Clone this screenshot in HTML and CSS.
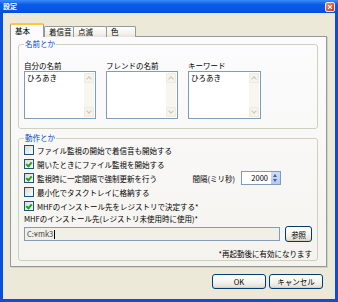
FILE: index.html
```html
<!DOCTYPE html>
<html lang="ja">
<head>
    <meta charset="UTF-8">
    <title>設定</title>
    <link rel="stylesheet" href="styles.css">
</head>
<body>
<div class="window">
    <div class="titlebar">
        <span class="title">設定</span>
        <span class="close">
            <svg width="8" height="8" viewBox="0 0 8 8"><path d="M1.5 1.5 L6.5 6.5 M6.5 1.5 L1.5 6.5" stroke="#fff" stroke-width="1.6"/></svg>
        </span>
    </div>
    <div class="client">
        <div class="tabs">
            <div class="tab active">基本</div>
            <div class="tab t2">着信音</div>
            <div class="tab t3">点滅</div>
            <div class="tab t4">色</div>
        </div>
        <div class="panel">
            <fieldset class="group names">
                <legend>名前とか</legend>
                <div class="fields">
                    <div class="field">
                        <div class="lbl">自分の名前</div>
                        <div class="memo"><span class="memo-text">ひろあき</span><div class="sbar"><span class="sbtn up"></span><span class="strack"></span><span class="sbtn down"></span></div></div>
                    </div>
                    <div class="field">
                        <div class="lbl">フレンドの名前</div>
                        <div class="memo"><span class="memo-text"></span><div class="sbar"><span class="sbtn up"></span><span class="strack"></span><span class="sbtn down"></span></div></div>
                    </div>
                    <div class="field">
                        <div class="lbl">キーワード</div>
                        <div class="memo"><span class="memo-text">ひろあき</span><div class="sbar"><span class="sbtn up"></span><span class="strack"></span><span class="sbtn down"></span></div></div>
                    </div>
                </div>
            </fieldset>
            <fieldset class="group actions">
                <legend>動作とか</legend>
                <div class="row"><span class="cb"></span>ファイル監視の開始で着信音も開始する</div>
                <div class="row"><span class="cb on"></span>開いたときにファイル監視を開始する</div>
                <div class="row"><span class="cb on"></span>監視時に一定間隔で強制更新を行う
                    <span class="interval">間隔(ミリ秒)
                        <span class="spin"><span class="spin-val">2000</span><span class="spin-btns"></span></span>
                    </span>
                </div>
                <div class="row"><span class="cb"></span>最小化でタスクトレイに格納する</div>
                <div class="row"><span class="cb on"></span>MHFのインストール先をレジストリで決定する*</div>
                <div class="path-label">MHFのインストール先(レジストリ未使用時に使用)*</div>
                <div class="path-row">
                    <span class="path">C:¥mk3<span class="caret"></span></span>
                    <span class="btn small">参照</span>
                </div>
                <div class="note">*再起動後に有効になります</div>
            </fieldset>
        </div>
        <div class="buttons">
            <span class="btn">OK</span>
            <span class="btn">キャンセル</span>
        </div>
    </div>
</div>
</body>
</html>
```

FILE: styles.css
```css
body {
    margin: 0;
    font-family: "Noto Sans CJK JP", "Liberation Sans", sans-serif;
    font-size: 7.5px;
    color: #000;
}

.window {
    width: 338px;
    height: 302px;
    box-sizing: border-box;
    background: #0a4fdc;
    padding: 0 3px 3px;
    display: flex;
    flex-direction: column;
}
.titlebar {
    height: 13px;
    display: flex;
    align-items: center;
    justify-content: space-between;
    background: linear-gradient(#3d8cf8, #0a5ce8 35%, #0654e4 85%, #0a4ccc);
    margin: 0 -3px;
    padding: 0 3px;
}
.title {
    color: #fff;
    font-weight: bold;
    font-size: 7px;
    line-height: 13px;
}
.close {
    width: 10px;
    height: 10px;
    box-sizing: border-box;
    border: 1px solid #f4e8e0;
    border-radius: 2px;
    background: linear-gradient(135deg, #f09070, #e0522a 60%, #c83a18);
    display: flex;
    align-items: center;
    justify-content: center;
}
.close svg { display: block; width: 6px; height: 6px; }

.client {
    flex: 1;
    background: #ece9d8;
    padding: 10px 8px 0 7px;
}

/* tabs */
.tabs {
    display: flex;
    align-items: flex-end;
    height: 14px;
    margin-bottom: -1px;
    position: relative;
    z-index: 1;
}
.tab {
    height: 11px;
    box-sizing: border-box;
    border: 1px solid #919b9c;
    border-bottom: none;
    border-radius: 2px 2px 0 0;
    background: linear-gradient(#fefefe, #f2f1ea 70%, #e5e3d8);
    line-height: 10px;
    padding-left: 4px;
    margin-left: -1px;
}
.tab.active {
    height: 14px;
    width: 34px;
    margin-left: 0;
    border-top: 2px solid #ffc83c;
    background: #fcfcfe;
    line-height: 12px;
    padding-left: 4px;
    position: relative;
    z-index: 2;
}
.t2 { width: 30px; margin-left: 0; }
.t3 { width: 34px; }
.t4 { width: 30px; }

.panel {
    height: 231px;
    box-sizing: border-box;
    border: 1px solid #919b9c;
    background: linear-gradient(#fcfcfe, #f4f3ee);
    box-shadow: 1px 1px 0 #d5d2c4;
    padding: 2px 8px 0 7px;
}

/* group boxes */
.group {
    margin: 0;
    padding: 0 5px;
    border: 1px solid #d0d0bf;
    border-radius: 3px;
    min-width: 0;
}
.group legend {
    color: #0046d5;
    line-height: 10px;
    padding: 0 1px;
    margin-left: 0;
}
.names {
    padding-bottom: 9px;
}
.fields {
    display: grid;
    grid-template-columns: 72px 72px 73px;
    column-gap: 10px;
    padding-top: 12px;
}
.lbl {
    line-height: 10px;
    white-space: nowrap;
}
.memo {
    height: 48px;
    box-sizing: border-box;
    border: 1px solid #7f9db9;
    background: #fff;
    display: flex;
    padding: 1px;
}
.memo-text {
    flex: 1;
    line-height: 10px;
    padding-left: 1px;
}
.sbar {
    width: 10px;
    display: flex;
    flex-direction: column;
    background: #f7f6f0;
}
.sbtn {
    height: 10px;
    box-sizing: border-box;
    border: 1px solid #ecebe3;
    border-radius: 1px;
    background: #f5f4ec;
    position: relative;
}
.sbtn::after {
    content: "";
    position: absolute;
    left: 2px;
    width: 3px;
    height: 3px;
    border-left: 1px solid #c9c7ba;
    border-top: 1px solid #c9c7ba;
}
.sbtn.up::after { top: 3px; transform: rotate(45deg); }
.sbtn.down::after { top: 1px; transform: rotate(225deg); }
.strack { flex: 1; }

.actions {
    margin-top: 4px;
    height: 128px;
    box-sizing: border-box;
}
.row {
    height: 14px;
    display: flex;
    align-items: center;
    white-space: nowrap;
}
.cb {
    width: 10px;
    height: 10px;
    box-sizing: border-box;
    border: 1px solid #1c5180;
    background: linear-gradient(135deg, #dcdcd6, #fbfbf9);
    margin-right: 3px;
    position: relative;
}
.cb.on::after {
    content: "";
    position: absolute;
    left: 2px;
    top: 1px;
    width: 2px;
    height: 4px;
    border-right: 2px solid #21a121;
    border-bottom: 2px solid #21a121;
    transform: rotate(40deg);
}
.interval {
    margin-left: auto;
    margin-right: 31px;
    display: flex;
    align-items: center;
}
.spin {
    margin-left: 6px;
    width: 40px;
    height: 14px;
    box-sizing: border-box;
    border: 1px solid #7f9db9;
    background: #fff;
    display: flex;
}
.spin-val {
    flex: 1;
    text-align: right;
    line-height: 12px;
    padding-right: 2px;
}
.spin-btns {
    width: 9px;
    background: linear-gradient(#cfdcfa, #b4c8f4);
    border-left: 1px solid #fff;
    position: relative;
}
.spin-btns::before, .spin-btns::after {
    content: "";
    position: absolute;
    left: 2px;
    border-left: 2.5px solid transparent;
    border-right: 2.5px solid transparent;
}
.spin-btns::before { top: 2px; border-bottom: 3px solid #4d6185; }
.spin-btns::after { bottom: 2px; border-top: 3px solid #4d6185; }

.path-label {
    line-height: 12px;
    white-space: nowrap;
}
.path-row {
    display: flex;
    align-items: center;
    margin-top: 1px;
}
.path {
    width: 259px;
    height: 14px;
    box-sizing: border-box;
    border: 1px solid #7f9db9;
    background: #f1f0e8;
    color: #444;
    line-height: 12px;
    padding-left: 2px;
    display: flex;
    align-items: center;
}
.caret {
    width: 1px;
    height: 9px;
    background: #000;
    margin-left: 1px;
}
.btn {
    box-sizing: border-box;
    border: 1px solid #003c74;
    border-radius: 3px;
    background: linear-gradient(#fff, #f2f1ec 60%, #dedbcf);
    box-shadow: inset 0 -1px 0 #d6d0c5;
    display: flex;
    align-items: center;
    justify-content: center;
    height: 15px;
    width: 54px;
}
.btn.small {
    width: 27px;
    height: 16px;
    margin-left: 5px;
}
.note {
    text-align: right;
    line-height: 12px;
    margin-top: 6px;
    padding-right: 0;
}

.buttons {
    display: flex;
    justify-content: flex-end;
    gap: 3px;
    margin-top: 7px;
    padding-right: 4px;
}
```
